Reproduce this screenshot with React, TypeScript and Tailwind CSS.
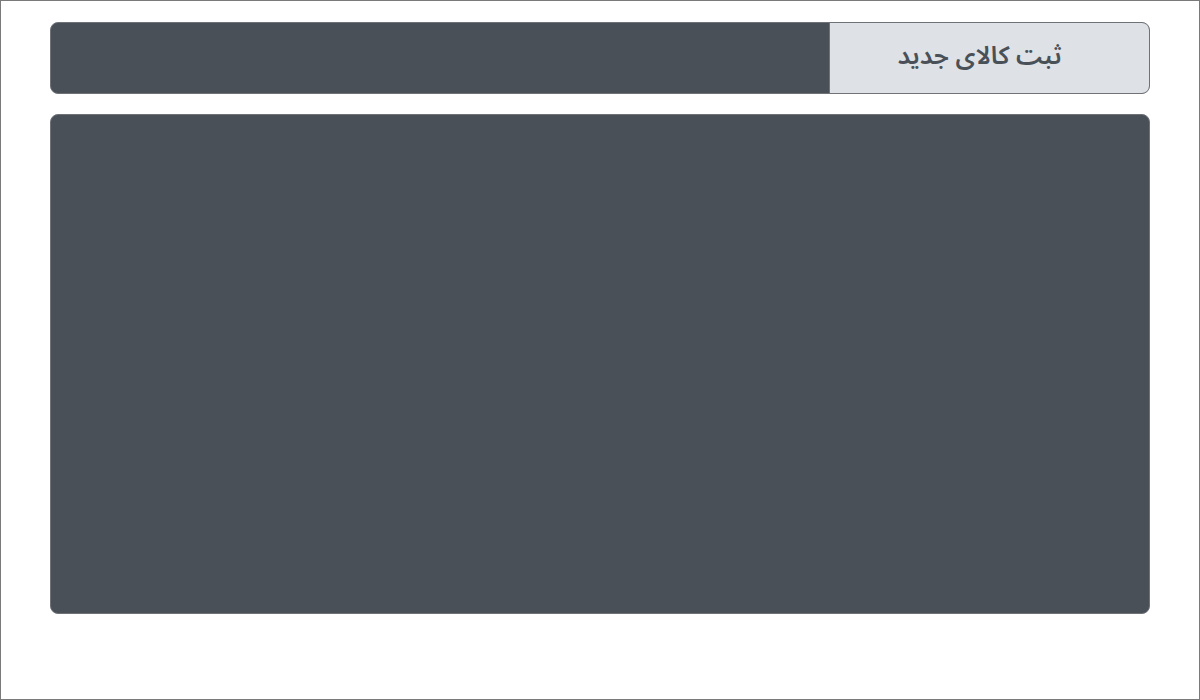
export default function App() {
  return (
    <div className="w-[1200px] h-[700px] border border-[#7a7a7a] bg-white box-border pt-[21px] px-[49px]" dir="rtl">
      <div className="flex h-[72px] rounded-[8px] border border-[#6f7378] overflow-hidden bg-[#4a5058]">
        <div className="w-[320px] h-full bg-[#dee1e6] border-l border-[#6f7378] flex items-center justify-center pr-[20px] pb-[2px]">
          <span className="text-[25px] font-semibold text-[#4a5058]" style={{ fontFamily: '"Noto Sans Arabic", "Vazirmatn", sans-serif' }}>ثبت کالای جدید</span>
        </div>
        <div className="flex-1" />
      </div>
      <div className="mt-[20px] h-[500px] rounded-[8px] border border-[#6f7378] bg-[#4a5058]" />
    </div>
  );
}
